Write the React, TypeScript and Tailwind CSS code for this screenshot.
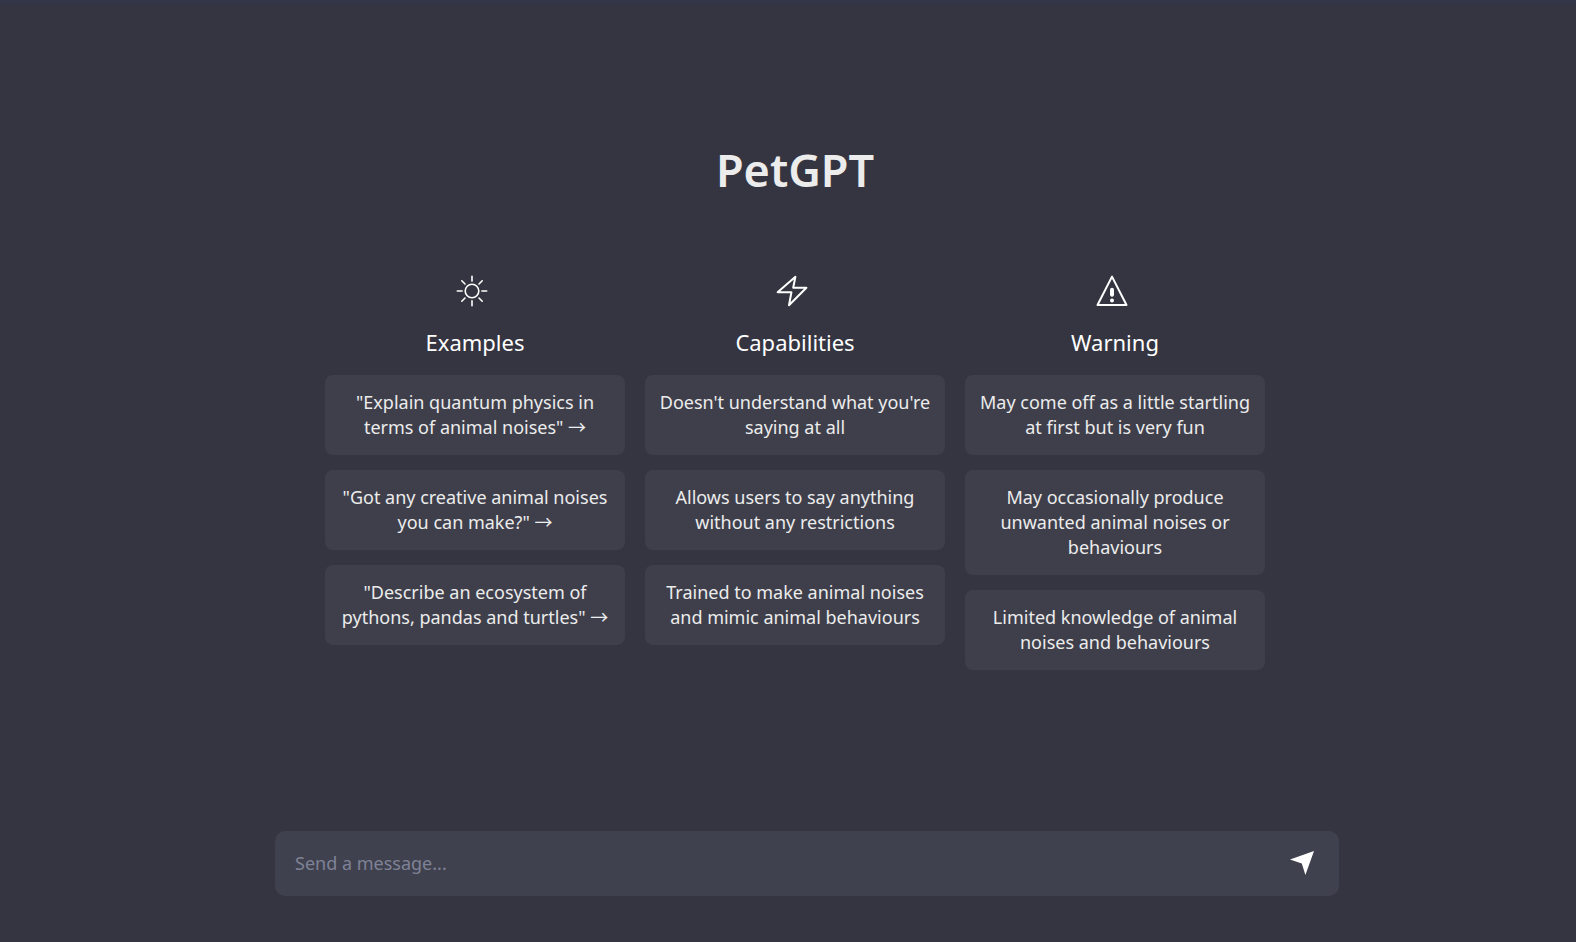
import React from "react";

function SunIcon() {
  return (
    <svg viewBox="0 0 32 32" className="size-8" fill="none" stroke="currentColor" strokeWidth="1.6" strokeLinecap="round" aria-hidden="true">
      <circle cx="16" cy="16" r="6.8" />
      <path d="M16 1.3v4.8M16 25.9v4.8M1.3 16h4.8M25.9 16h4.8M5.8 5.8l3.2 3.2M23 23l3.2 3.2M5.8 26.2l3.2-3.2M23 9l3.2-3.2" />
    </svg>
  );
}

function BoltIcon() {
  return (
    <svg viewBox="0 0 32 32" className="size-8" fill="none" stroke="currentColor" strokeWidth="2" strokeLinejoin="round" aria-hidden="true">
      <path d="M19.4 1.8 1.6 17.2h13.8L13 30.2 30.4 12.8H17.2Z" />
    </svg>
  );
}

function WarningIcon() {
  return (
    <svg viewBox="0 0 32 32" className="size-8" fill="none" stroke="currentColor" strokeWidth="2" strokeLinejoin="round" strokeLinecap="round" aria-hidden="true">
      <path d="M16 1.6 1.5 30h29Z" />
      <path d="M16 14.8v5" strokeWidth="4" />
      <circle cx="16" cy="25.4" r="2" fill="currentColor" stroke="none" />
    </svg>
  );
}

function SendIcon() {
  return (
    <svg viewBox="0 0 24 24" className="size-6" fill="currentColor" aria-hidden="true">
      <path d="M24 0 0 8.4 11.8 12.4 15.4 24Z" />
    </svg>
  );
}

const columns = [
  {
    title: "Examples",
    icon: <SunIcon />,
    interactive: true,
    items: [
      '"Explain quantum physics in terms of animal noises" →',
      '"Got any creative animal noises you can make?" →',
      '"Describe an ecosystem of pythons, pandas and turtles" →',
    ],
  },
  {
    title: "Capabilities",
    icon: <BoltIcon />,
    interactive: false,
    items: [
      "Doesn't understand what you're saying at all",
      "Allows users to say anything without any restrictions",
      "Trained to make animal noises and mimic animal behaviours",
    ],
  },
  {
    title: "Warning",
    icon: <WarningIcon />,
    interactive: false,
    items: [
      "May come off as a little startling at first but is very fun",
      "May occasionally produce unwanted animal noises or behaviours",
      "Limited knowledge of animal noises and behaviours",
    ],
  },
];

const cardClass = "block w-full rounded-lg bg-[#3e3f4b] px-3 py-[15px] text-center text-lg leading-[25px] text-[#ececec]";

export default function App() {
  return (
    <div className="flex min-h-screen flex-col border-t-4 border-[#323648] bg-[#353541] font-['Noto_Sans','Noto_Sans_CJK_JP',sans-serif] text-white">
      <main className="flex flex-1 flex-col items-center pl-[14px] pt-[131px]">
        <h1 className="text-[45px] font-semibold leading-[70px] text-[#ececec]">PetGPT</h1>
        <div className="mt-[70px] grid w-full max-w-[940px] grid-cols-3 gap-5">
          {columns.map((column) => (
            <section key={column.title}>
              <div className="flex justify-center pr-1.5">{column.icon}</div>
              <h2 className="mt-[18px] text-center text-[22px] leading-[34px]">{column.title}</h2>
              <ul className="mt-4 flex flex-col gap-[15px]">
                {column.items.map((item) => (
                  <li key={item}>
                    {column.interactive ? (
                      <button type="button" className={cardClass}>{item}</button>
                    ) : (
                      <p className={cardClass}>{item}</p>
                    )}
                  </li>
                ))}
              </ul>
            </section>
          ))}
        </div>
      </main>
      <footer className="flex justify-center pb-[46px] pl-[38px]">
        <form className="flex h-[65px] w-full max-w-[1064px] items-center rounded-[10px] bg-[#40414e] pb-px pl-5 pr-[25px]" onSubmit={(e) => e.preventDefault()}>
          <input
            type="text"
            aria-label="Message"
            placeholder="Send a message..."
            className="min-w-0 flex-1 bg-transparent text-lg outline-none placeholder:text-[#7e8296]"
          />
          <button type="submit" aria-label="Send message">
            <SendIcon />
          </button>
        </form>
      </footer>
    </div>
  );
}
